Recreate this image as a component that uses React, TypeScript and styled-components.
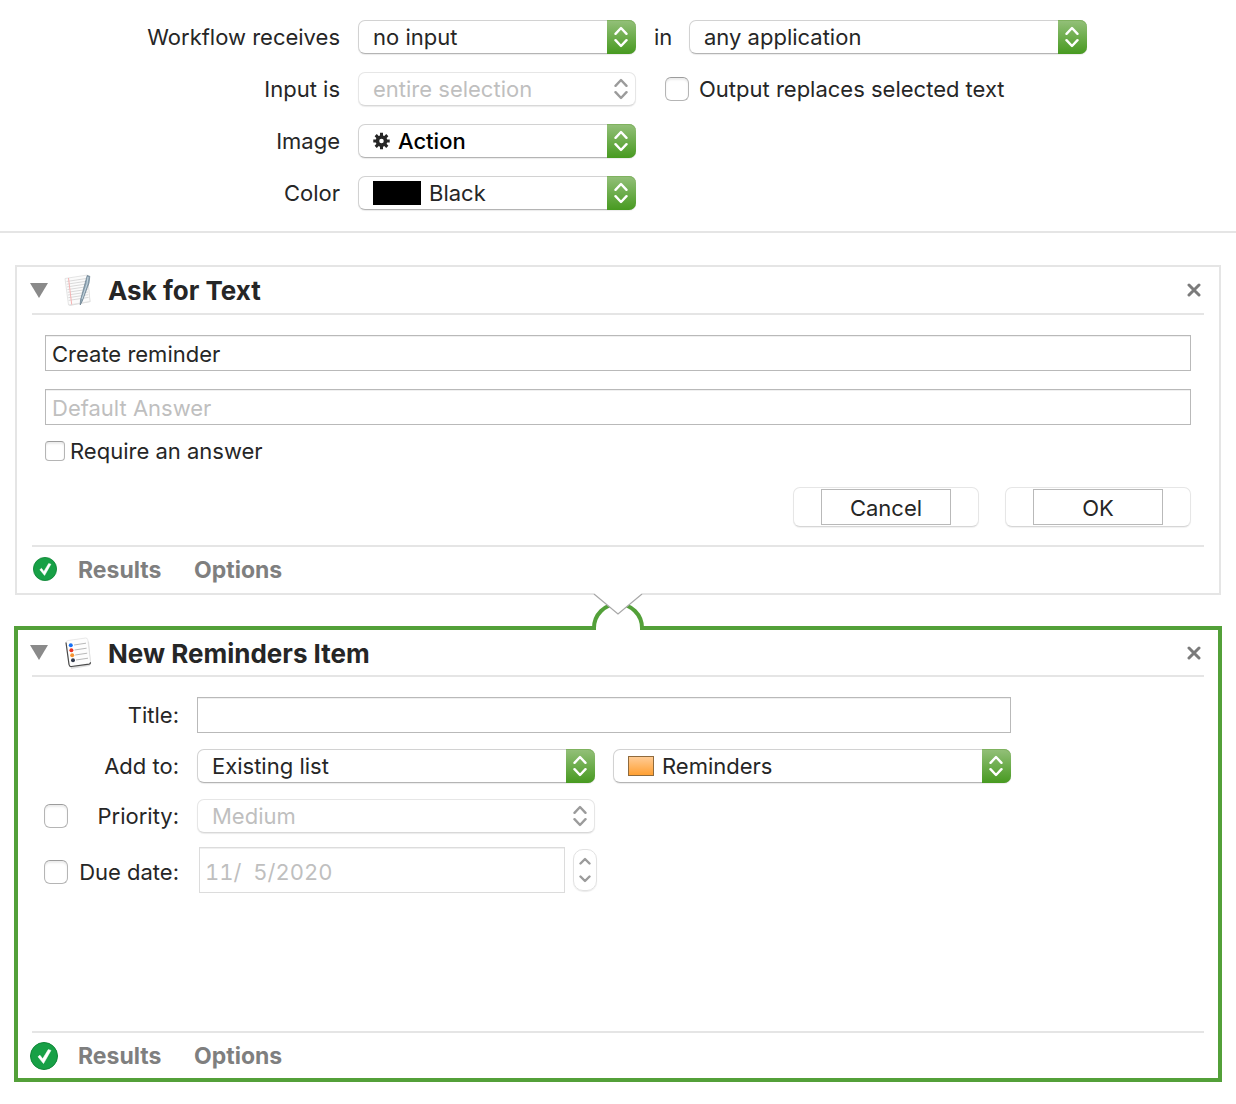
import React from "react";
import styled, { createGlobalStyle, css } from "styled-components";

const ink = "#262626";
const faded = "#bfbfbf";
const rule = "#e5e5e5";
const green = "#53a039";

const GlobalStyle = createGlobalStyle`
  * { box-sizing: border-box; }
  body {
    margin: 0;
    background: #ffffff;
    color: ${ink};
    font: 400 22px/28px Inter, "Liberation Sans", sans-serif;
  }
  button, input, select { font: inherit; color: inherit; margin: 0; }
`;

const Settings = styled.header`
  display: grid;
  grid-template-columns: 191px minmax(0, 278px) minmax(0, 433px);
  column-gap: 18px;
  row-gap: 18px;
  justify-content: center;
  align-items: center;
  padding: 20px 0 21px;
  border-bottom: 2px solid ${rule};
`;

const SettingLabel = styled.label`
  grid-column: 1;
  justify-self: end;
  white-space: nowrap;
`;

const Application = styled.div`
  display: flex;
  align-items: center;
  justify-content: space-between;
`;

const Popup = styled.div<{ $width?: number }>`
  position: relative;
  display: flex;
  height: 34px;
  width: ${(p) => (p.$width ? `${p.$width}px` : "100%")};
  min-width: 0;
`;

const PopupSelect = styled.select<{ $inset?: number; $strong?: boolean }>`
  appearance: none;
  width: 100%;
  height: 34px;
  padding: 0 34px 0 ${(p) => p.$inset ?? 14}px;
  border: 1px solid #d2d2d2;
  border-bottom-color: #b4b4b4;
  border-radius: 7px;
  background: #ffffff;
  box-shadow: 0 1px 1px rgba(0, 0, 0, 0.08);
  line-height: 28px;
  opacity: 1;
  ${(p) =>
    p.$strong &&
    css`
      color: #000000;
      font-weight: 500;
    `}
  &:disabled {
    color: ${faded};
    border-color: #e6e6e6;
    border-bottom-color: #d8d8d8;
  }
`;

const Cap = styled.span<{ $off?: boolean }>`
  position: absolute;
  top: 0;
  right: 0;
  width: 29px;
  height: 34px;
  padding-right: 1px;
  display: grid;
  place-items: center;
  pointer-events: none;
  border-radius: 0 7px 7px 0;
  color: ${(p) => (p.$off ? "#9b9b9b" : "#ffffff")};
  background: ${(p) => (p.$off ? "none" : "linear-gradient(#94c07a, #479a20)")};
  box-shadow: ${(p) => (p.$off ? "none" : "inset 0 1px 0 #7fb25f")};
`;

const Adornment = styled.span`
  position: absolute;
  top: 0;
  bottom: 0;
  left: 15px;
  display: flex;
  align-items: center;
  pointer-events: none;
`;

const Swatch = styled.span`
  width: 48px;
  height: 24px;
  background: #000000;
`;

const ListColor = styled.span`
  width: 26px;
  height: 20px;
  border: 1px solid #8f6a3c;
  background: linear-gradient(#ffcb94, #ffa033);
`;

const CheckLabel = styled.label<{ $gap: number; $indent?: number }>`
  display: flex;
  align-items: center;
  gap: ${(p) => p.$gap}px;
  padding-left: ${(p) => p.$indent ?? 0}px;
  height: 20px;
  white-space: nowrap;
`;

const Checkbox = styled.input.attrs({ type: "checkbox" })<{ $size: number }>`
  appearance: none;
  flex: none;
  width: ${(p) => p.$size}px;
  height: ${(p) => p.$size}px;
  border: 1px solid #b5b5b5;
  border-top-color: #9c9c9c;
  border-radius: ${(p) => (p.$size > 20 ? 6 : 4)}px;
  background: #ffffff;
  box-shadow: inset 0 2px 2px rgba(0, 0, 0, 0.08);
  &:checked { background: ${green}; }
`;

const Workflow = styled.main`
  display: flex;
  flex-direction: column;
  gap: 31px;
  padding: 32px 14px 22px;
`;

const ActionCard = styled.section<{ $selected?: boolean }>`
  position: relative;
  margin: 0 ${(p) => (p.$selected ? 0 : 1)}px;
  padding: 0 ${(p) => (p.$selected ? 14 : 15)}px;
  border: ${(p) => (p.$selected ? `4px solid ${green}` : `2px solid ${rule}`)};
`;

const CardHeader = styled.div<{ $selected?: boolean }>`
  display: flex;
  align-items: center;
  height: ${(p) => (p.$selected ? 47 : 48)}px;
  border-bottom: 2px solid ${rule};
`;

const IconButton = styled.button`
  display: grid;
  place-items: center;
  flex: none;
  width: 20px;
  height: 20px;
  padding: 0;
  border: 0;
  background: none;
  color: #7b7b7b;
`;

const Disclosure = styled(IconButton)`
  margin: 0 14px 0 -3px;
`;

const CardTitle = styled.h2`
  flex: 1;
  margin: 0 0 0 15px;
  padding-top: 2px;
  font-size: 26px;
  line-height: 32px;
  font-weight: 700;
`;

const CardFooter = styled.div<{ $selected?: boolean }>`
  display: flex;
  align-items: center;
  height: ${(p) => (p.$selected ? 47 : 48)}px;
  border-top: 2px solid ${rule};
`;

const StatusSlot = styled.span<{ $selected?: boolean }>`
  display: flex;
  flex: none;
  justify-content: center;
  width: 28px;
  margin-left: ${(p) => (p.$selected ? -2 : -1)}px;
  margin-right: ${(p) => (p.$selected ? 20 : 19)}px;
  padding-bottom: ${(p) => (p.$selected ? 0 : 2)}px;
`;

const FooterButton = styled.button`
  padding: 0;
  border: 0;
  background: none;
  color: #7f7f7f;
  font-size: 23px;
  font-weight: 700;
  min-width: 84px;
  margin-right: 32px;
  text-align: left;
`;

const AskBody = styled.div`
  display: flex;
  flex-direction: column;
  padding: 20px 13px 18px;
`;

const TextField = styled.input`
  width: 100%;
  min-width: 0;
  height: 36px;
  padding: 1px 6px 0;
  border: 1px solid #b9b9b9;
  border-radius: 0;
  background: #ffffff;
  box-shadow: inset 0 1px 0 #f0f0f0;
  &::placeholder { color: ${faded}; opacity: 1; }
`;

const AskFields = styled.div`
  display: grid;
  gap: 18px;
  margin-bottom: 16px;
`;

const Buttons = styled.div`
  display: flex;
  justify-content: flex-end;
  gap: 26px;
  margin-top: 26px;
`;

const PushButton = styled.button`
  display: flex;
  justify-content: center;
  width: 186px;
  height: 40px;
  padding: 1px;
  border: 1px solid #e6e6e6;
  border-bottom-color: #d6d6d6;
  border-radius: 7px;
  background: #ffffff;
  box-shadow: 0 1px 1px rgba(0, 0, 0, 0.06);
`;

const ButtonTitle = styled.span`
  width: 130px;
  height: 36px;
  border: 1px solid #b9b9b9;
  line-height: 36px;
`;

const ReminderBody = styled.div`
  display: grid;
  grid-template-columns: 135px minmax(0, 398px) minmax(0, 398px);
  grid-auto-rows: max-content;
  column-gap: 18px;
  row-gap: 16px;
  align-items: center;
  min-height: 354px;
  padding: 20px 12px;
`;

const FieldHead = styled.div`
  display: flex;
  grid-column: 1;
  align-items: center;
  justify-content: flex-end;
`;

const DateHead = styled(FieldHead)`
  padding-top: 4px;
`;

const FieldLabel = styled.label`
  flex: 1;
  text-align: right;
  white-space: nowrap;
`;

const TitleCell = styled.div`
  display: flex;
  grid-column: 2 / 4;
`;

const DateCell = styled.div`
  display: flex;
  align-items: center;
  gap: 8px;
  height: 42px;
  padding-left: 2px;
  margin-right: -2px;
`;

const DateField = styled(TextField)`
  flex: 1;
  height: 46px;
  padding: 4px 5px 0;
  border-color: #dcdcdc;
  color: ${faded};
  font-variant-numeric: tabular-nums;
`;

const Stepper = styled.div`
  display: grid;
  flex: none;
  width: 24px;
  height: 42px;
  padding: 2px 1px;
  border: 1px solid #e2e2e2;
  border-radius: 10px;
  box-shadow: 0 1px 1px rgba(0, 0, 0, 0.08);
`;

const StepButton = styled.button`
  display: grid;
  place-items: center;
  padding: 0;
  border: 0;
  background: none;
  color: #9b9b9b;
`;

const Connector = styled.svg`
  position: absolute;
  top: -37px;
  left: calc(50% - 26px);
`;

const Chevrons = () => (
  <svg width="14" height="22" viewBox="0 0 14 22" fill="none" stroke="currentColor" strokeWidth="2.4" strokeLinecap="round" strokeLinejoin="round" aria-hidden="true">
    <path d="M1.500 7.800 7 2 12.500 7.800M1.500 14.200 7 20 12.500 14.200" />
  </svg>
);

const StepArrow = ({ down }: { down?: boolean }) => (
  <svg width="12" height="8" viewBox="0 0 12 8" fill="none" stroke="currentColor" strokeWidth="2.400" strokeLinecap="round" strokeLinejoin="round" aria-hidden="true">
    <path d={down ? "M1.500 1.500 6 6 10.500 1.500" : "M1.500 6.500 6 2 10.500 6.500"} />
  </svg>
);

const Gear = () => (
  <svg width="17" height="18" viewBox="-9 -9 18 18" aria-hidden="true">
    <g stroke="#262626" strokeWidth="3.200">
      {[0, 45, 90, 135].map((a) => (
        <path key={a} d="M0-8.700V-4M0 4V8.700" transform={`rotate(${a})`} />
      ))}
    </g>
    <circle r="4.300" fill="none" stroke="#262626" strokeWidth="3.800" />
  </svg>
);

const Triangle = () => (
  <svg width="18" height="15" viewBox="0 0 18 15" aria-hidden="true">
    <path d="M0 0h18L9 15z" fill="#8a8a8a" />
  </svg>
);

const Cross = () => (
  <svg width="14" height="14" viewBox="0 0 14 14" aria-hidden="true">
    <path d="M2 2l10 10M12 2 2 12" stroke="currentColor" strokeWidth="3" strokeLinecap="round" />
  </svg>
);

const Notepad = () => (
  <svg width="30" height="34" viewBox="0 0 30 34" aria-hidden="true">
    <path d="M3 6.500 24.500 3l3 26L6.500 33z" fill="#dcdcdc" />
    <path d="M2 5.500 24.500 2l2.500 26.500L5.500 32z" fill="#fbfbfb" stroke="#dedede" strokeWidth=".8" />
    <g stroke="#d6d6d6" strokeWidth=".9">
      {[0, 1, 2, 3, 4, 5, 6, 7].map((i) => (
        <path key={i} d={`M${3.5 + i * 0.3} ${8.5 + i * 2.7}l20-3`} />
      ))}
    </g>
    <path d="M5.500 5l3.200 26.500" stroke="#f5b3b3" strokeWidth="1" />
    <path d="M24.200 2.500 26.800 3.300 26 10 19.300 28 17.200 32 17.500 27z" fill="#8fa5b4" stroke="#657b8b" strokeWidth=".7" />
    <path d="M25 4 24 11l-5 15" fill="none" stroke="#c9d9e3" strokeWidth=".9" />
  </svg>
);

const ReminderList = () => (
  <svg width="30" height="34" viewBox="0 0 30 34" aria-hidden="true">
    <path d="M5 9 26 5.500l2 22.500-1.500 2L8 33z" fill="#dedede" />
    <path d="M3 7Q3 5 5 4.500L22.500 2q2-.2 2.300 1.800L27.500 26q.2 2-1.800 2.400L8.500 30.500q-2 .3-2.300-1.700z" fill="#fdfdfd" stroke="#dadada" strokeWidth=".6" />
    <path d="M3 6.500 6 28.500q.4 2.300 2.500 2L26 28.200q1.600-.3 1.500-2" fill="none" stroke="#4a4a4a" strokeWidth="1.200" />
    <g stroke="#b9b9b9" strokeWidth="1">
      <path d="M11 9 23 7.200M11.600 14 23.600 12.200M12.200 19 24.200 17.200M13 24l12-1.800" />
    </g>
    <circle cx="7.800" cy="9.300" r="2" fill="#1670f5" />
    <circle cx="8.400" cy="14.300" r="2" fill="#ea3324" />
    <circle cx="9.200" cy="19.300" r="2" fill="#f59331" />
    <circle cx="10" cy="24.200" r="2" fill="#333a4c" />
  </svg>
);

const StatusOk = ({ size }: { size: number }) => (
  <svg width={size} height={size} viewBox="0 0 28 28" role="img" aria-label="Completed">
    <circle cx="14" cy="14" r="13.500" fill="#17a046" stroke="#0f8537" />
    <path d="M8 14.800 9.900 13.200 12.700 16.800 18.300 7.600 20.900 8.400 13.500 21.500z" fill="#ffffff" stroke="#ffffff" strokeWidth=".6" />
  </svg>
);

type PopupMenuProps = {
  id?: string;
  label?: string;
  value: string;
  width?: number;
  inset?: number;
  strong?: boolean;
  disabled?: boolean;
  children?: React.ReactNode;
};

const PopupMenu = ({ id, label, value, width, inset, strong, disabled, children }: PopupMenuProps) => (
  <Popup $width={width}>
    <PopupSelect id={id} aria-label={label} disabled={disabled} $inset={inset} $strong={strong}>
      <option>{value}</option>
    </PopupSelect>
    {children && <Adornment>{children}</Adornment>}
    <Cap $off={disabled}>
      <Chevrons />
    </Cap>
  </Popup>
);

type ActionProps = {
  title: string;
  icon: React.ReactNode;
  selected?: boolean;
  children: React.ReactNode;
};

const Action = ({ title, icon, selected, children }: ActionProps) => (
  <ActionCard $selected={selected}>
    {selected && (
      <Connector width="52" height="37" viewBox="0 0 52 37" aria-hidden="true">
        <path d="M2 0h48v3H2z" fill="#ffffff" />
        <path d="M4 37V33a22 22 0 0 1 44 0v4z" fill="#ffffff" />
        <path d="M2 37V35a24 24 0 0 1 48 0v2" fill="none" stroke={green} strokeWidth="4" />
        <path d="M2 0V1L26 21 50 1V0z" fill="#ffffff" />
        <path d="M2 1 26 21 50 1" fill="none" stroke="#a8a8a8" strokeWidth="1.200" />
      </Connector>
    )}
    <CardHeader $selected={selected}>
      <Disclosure type="button" aria-label={`Collapse ${title}`}>
        <Triangle />
      </Disclosure>
      {icon}
      <CardTitle>{title}</CardTitle>
      <IconButton type="button" aria-label={`Remove ${title}`}>
        <Cross />
      </IconButton>
    </CardHeader>
    {children}
    <CardFooter $selected={selected}>
      <StatusSlot $selected={selected}>
        <StatusOk size={selected ? 28 : 24} />
      </StatusSlot>
      <FooterButton type="button">Results</FooterButton>
      <FooterButton type="button">Options</FooterButton>
    </CardFooter>
  </ActionCard>
);

export default function App() {
  return (
    <>
      <GlobalStyle />
      <Settings>
        <SettingLabel htmlFor="receives">Workflow receives</SettingLabel>
        <PopupMenu id="receives" value="no input" />
        <Application>
          <label htmlFor="application">in</label>
          <PopupMenu id="application" value="any application" width={398} />
        </Application>

        <SettingLabel htmlFor="input-is">Input is</SettingLabel>
        <PopupMenu id="input-is" value="entire selection" disabled />
        <CheckLabel $gap={10} $indent={11}>
          <Checkbox $size={24} />
          Output replaces selected text
        </CheckLabel>

        <SettingLabel htmlFor="image">Image</SettingLabel>
        <PopupMenu id="image" value="Action" inset={39} strong>
          <Gear />
        </PopupMenu>

        <SettingLabel htmlFor="color">Color</SettingLabel>
        <PopupMenu id="color" value="Black" inset={70}>
          <Swatch />
        </PopupMenu>
      </Settings>

      <Workflow>
        <Action title="Ask for Text" icon={<Notepad />}>
          <AskBody>
            <AskFields>
              <TextField aria-label="Question" defaultValue="Create reminder" />
              <TextField aria-label="Default answer" placeholder="Default Answer" />
            </AskFields>
            <CheckLabel $gap={5}>
              <Checkbox $size={20} />
              Require an answer
            </CheckLabel>
            <Buttons>
              <PushButton type="button">
                <ButtonTitle>Cancel</ButtonTitle>
              </PushButton>
              <PushButton type="button">
                <ButtonTitle>OK</ButtonTitle>
              </PushButton>
            </Buttons>
          </AskBody>
        </Action>

        <Action title="New Reminders Item" icon={<ReminderList />} selected>
          <ReminderBody>
            <FieldHead>
              <FieldLabel htmlFor="title">Title:</FieldLabel>
            </FieldHead>
            <TitleCell>
              <TextField id="title" />
            </TitleCell>

            <FieldHead>
              <FieldLabel htmlFor="add-to">Add to:</FieldLabel>
            </FieldHead>
            <PopupMenu id="add-to" value="Existing list" />
            <PopupMenu label="List" value="Reminders" inset={48}>
              <ListColor />
            </PopupMenu>

            <FieldHead>
              <Checkbox $size={24} id="priority" />
              <FieldLabel htmlFor="priority">Priority:</FieldLabel>
            </FieldHead>
            <PopupMenu label="Priority level" value="Medium" disabled />

            <DateHead>
              <Checkbox $size={24} id="due" />
              <FieldLabel htmlFor="due">Due date:</FieldLabel>
            </DateHead>
            <DateCell>
              <DateField aria-label="Date" defaultValue="11/  5/2020" disabled />
              <Stepper>
                <StepButton type="button" aria-label="Later" disabled>
                  <StepArrow />
                </StepButton>
                <StepButton type="button" aria-label="Earlier" disabled>
                  <StepArrow down />
                </StepButton>
              </Stepper>
            </DateCell>
          </ReminderBody>
        </Action>
      </Workflow>
    </>
  );
}
